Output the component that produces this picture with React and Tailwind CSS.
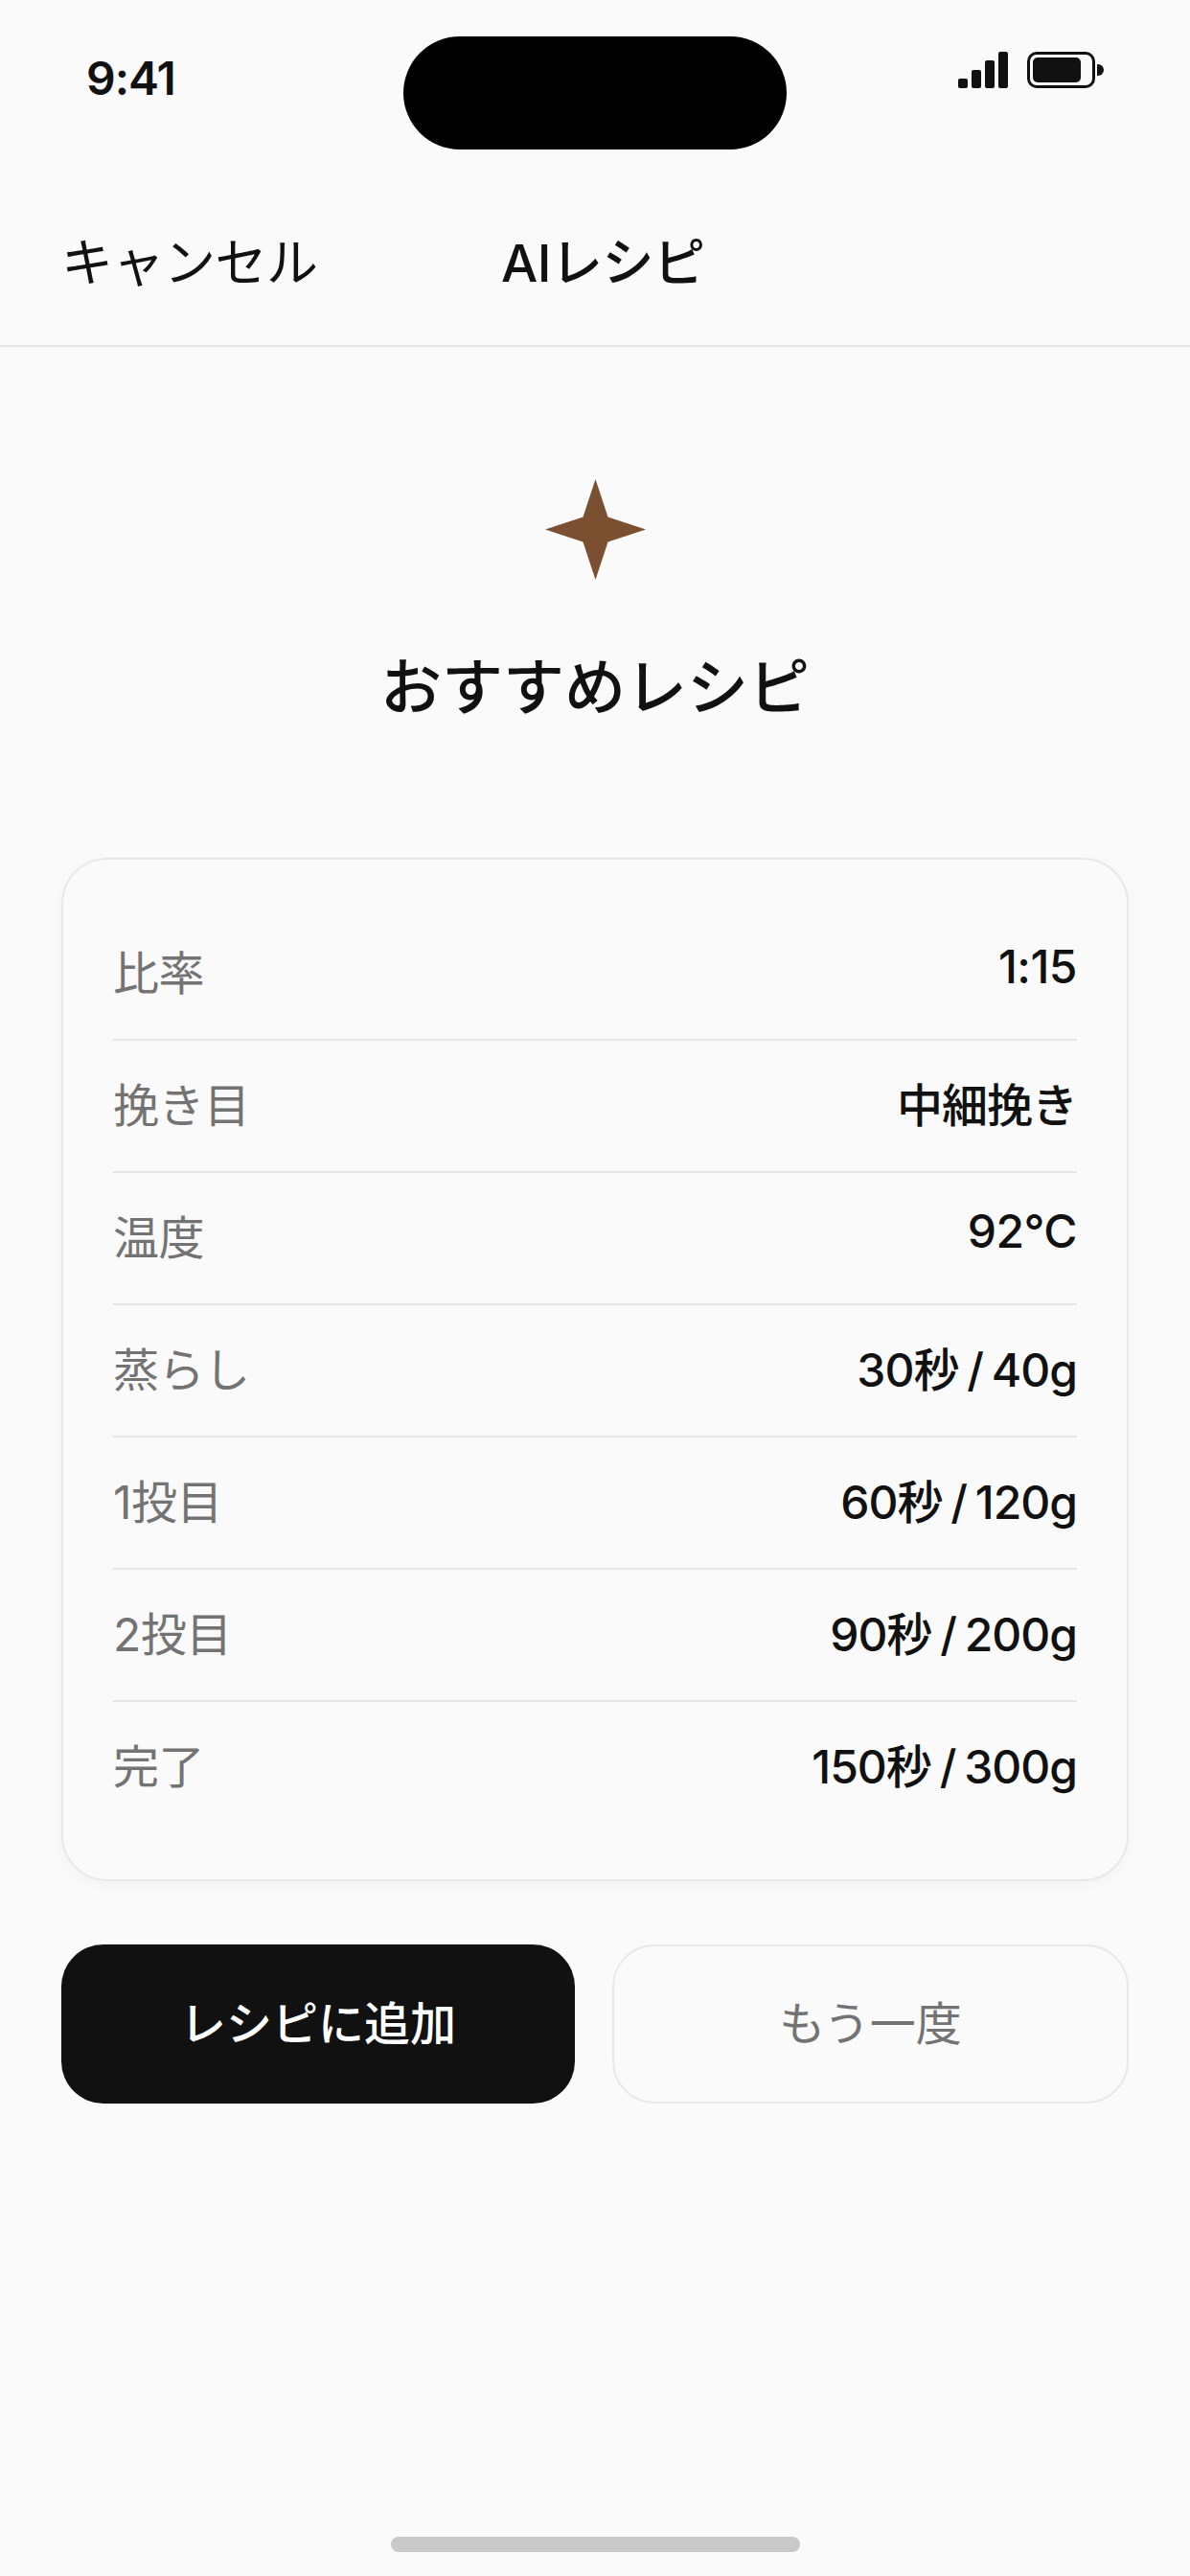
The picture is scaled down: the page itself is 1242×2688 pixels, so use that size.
const font = { fontFamily: 'Inter, "Noto Sans CJK JP", sans-serif' };

const rows = [
  { label: '比率', value: '1:15', latin: true },
  { label: '挽き目', value: '中細挽き' },
  { label: '温度', value: '92°C', latin: true },
  { label: '蒸らし', value: '30秒 / 40g' },
  { label: '1投目', value: '60秒 / 120g' },
  { label: '2投目', value: '90秒 / 200g' },
  { label: '完了', value: '150秒 / 300g' },
];

function StatusBar() {
  return (
    <div className="flex h-[156px] items-start pt-[38px] pl-[90px] pr-[89px]">
      <div className="mt-[15px] w-[331px] text-[48px] leading-[58px] font-semibold tracking-[-1px] text-[#111111]">9:41</div>
      <div className="h-[118px] w-[400px] rounded-[59px] bg-black" />
      <div className="ml-[179px] mt-[16px] flex items-end gap-[4px]">
        <div className="h-[10px] w-[10px] rounded-[2px] bg-[#111111]" />
        <div className="h-[19px] w-[10px] rounded-[2px] bg-[#111111]" />
        <div className="h-[29px] w-[10px] rounded-[2px] bg-[#111111]" />
        <div className="h-[38px] w-[10px] rounded-[2px] bg-[#111111]" />
      </div>
      <div className="ml-[20px] mt-[16px] flex items-center gap-[2px]">
        <div className="flex h-[38px] w-[71px] items-center rounded-[10px] border-[3px] border-[#111111] pl-[3px]">
          <div className="h-[26px] w-[50px] rounded-[5px] bg-[#111111]" />
        </div>
        <div className="h-[12px] w-[7px] rounded-r-[6px] bg-[#111111]" />
      </div>
    </div>
  );
}

export default function App() {
  return (
    <div className="flex h-[2688px] w-[1242px] flex-col bg-[#fafafa]" style={font}>
      <StatusBar />

      <header className="flex h-[206px] items-center border-b-2 border-[#e5e5e5] pt-[32px] pl-[64px]">
        <span className="w-[459px] text-[54px] tracking-[-0.5px] text-[#111111]">キャンセル</span>
        <span className="text-[54px] font-medium tracking-[-0.5px] text-[#111111]">AIレシピ</span>
      </header>

      <main className="flex flex-1 flex-col px-[64px]">
        <div className="mt-[138px] flex flex-col items-center">
          <svg viewBox="0 0 105 105" className="h-[105px] w-[105px] fill-[#7a5030]">
            <path d="M52.5 0 65.5 39.5 105 52.5 65.5 65.5 52.5 105 39.5 65.5 0 52.5 39.5 39.5Z" />
          </svg>
          <h1 className="mt-[64px] text-[64px] font-medium text-[#111111]">おすすめレシピ</h1>
        </div>

        <section className="mt-[130px] rounded-[48px] border-2 border-[#e8e8e8] px-[52px] pt-[51px] pb-[49px] shadow-[0_4px_16px_rgba(0,0,0,0.03)]">
          {rows.map(({ label, value, latin }, i) => (
            <div
              key={label}
              className={i < rows.length - 1
                ? 'flex h-[138px] items-center justify-between border-b-2 border-[#e5e5e5]'
                : 'flex h-[136px] items-center justify-between'}
            >
              <span className="text-[48px] tracking-[-0.5px] text-[#737373]">{label}</span>
              <span className={latin
                ? 'mb-[14px] text-[48px] font-medium tracking-[-0.5px] text-[#111111]'
                : 'text-[48px] font-medium tracking-[-1px] [word-spacing:-3px] text-[#111111]'}
              >
                {value}
              </span>
            </div>
          ))}
        </section>

        <div className="mt-[66px] flex gap-[39px]">
          <button className="h-[166px] w-[536px] rounded-[44px] bg-[#111111] text-[48px] font-medium text-white">レシピに追加</button>
          <button className="h-[166px] flex-1 rounded-[44px] border-2 border-[#e8e8e8] text-[48px] text-[#737373]">もう一度</button>
        </div>
      </main>

      <div className="flex justify-center pb-[25px]">
        <div className="h-[16px] w-[427px] rounded-full bg-[#c9c9c9]" />
      </div>
    </div>
  );
}
